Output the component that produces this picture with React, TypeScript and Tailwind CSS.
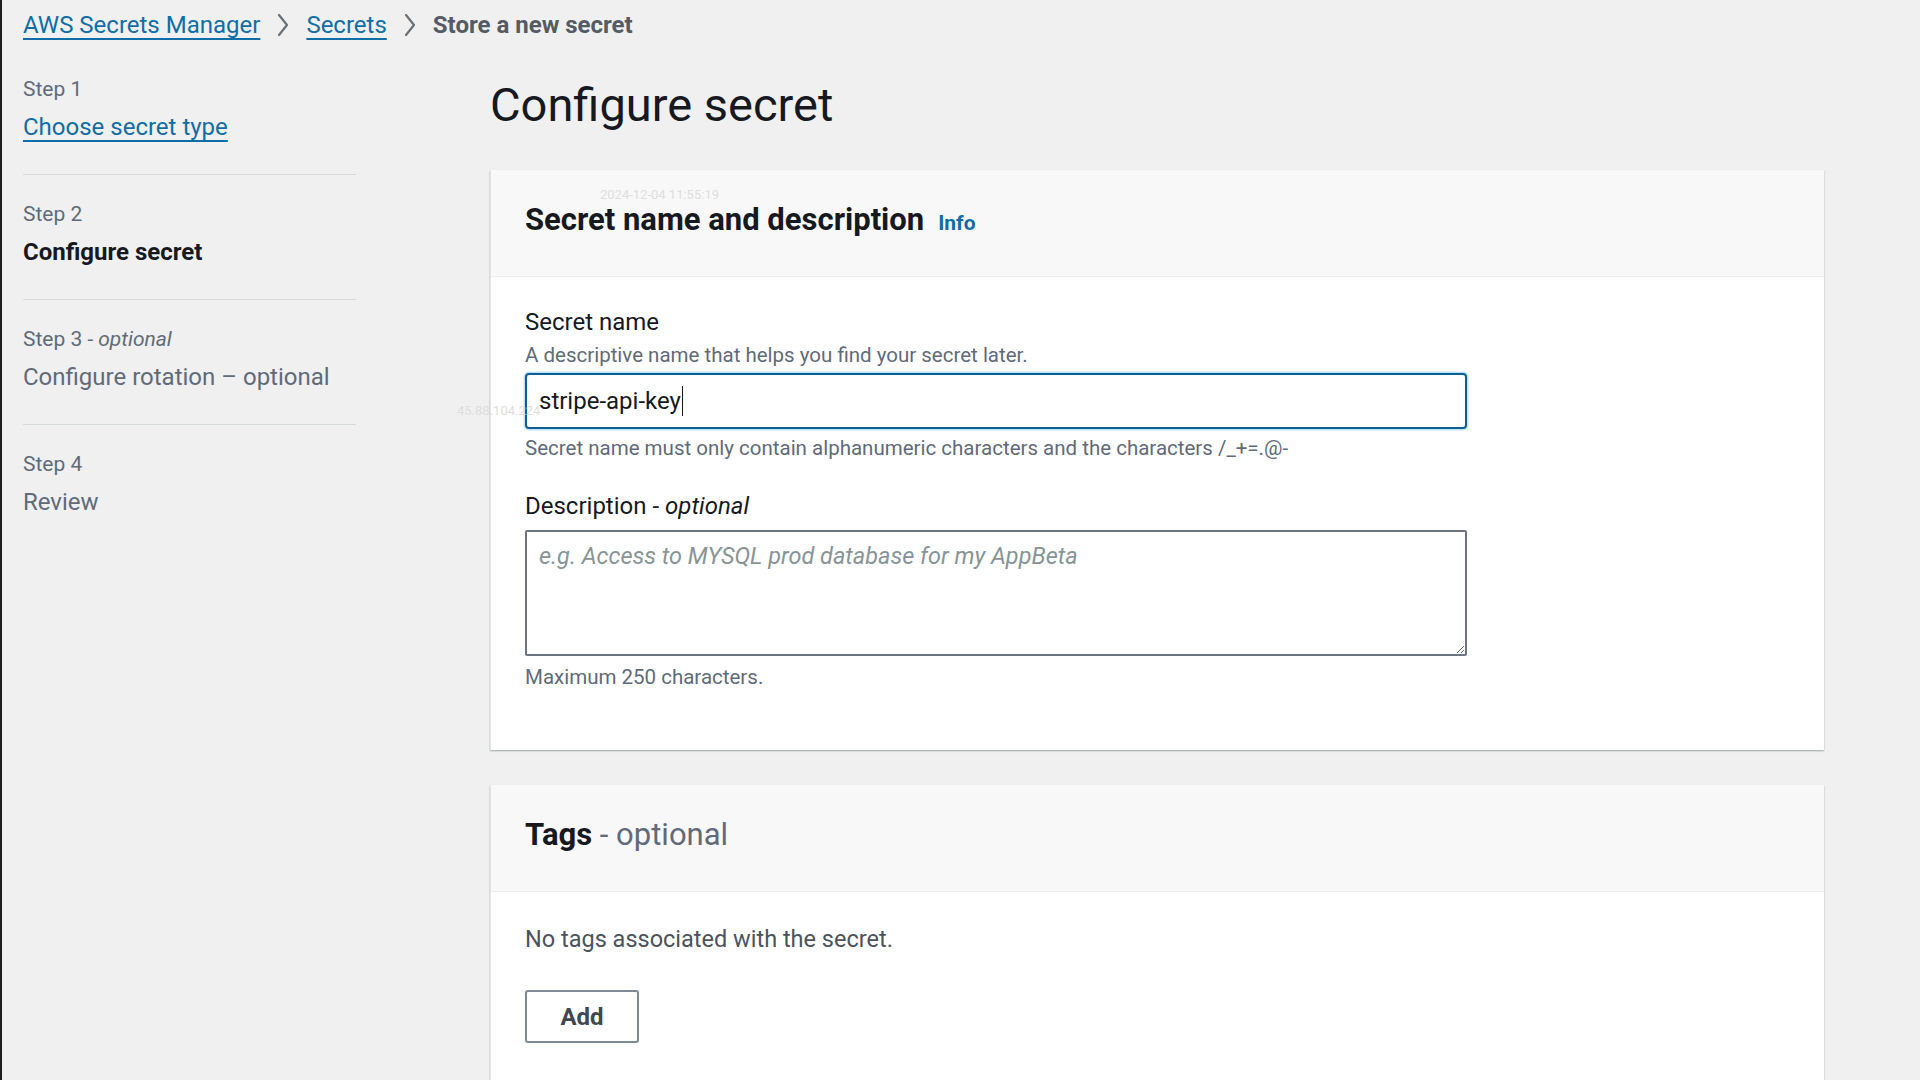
import React from 'react';

const steps = [
  { label: 'Step 1', title: 'Choose secret type', kind: 'link' },
  { label: 'Step 2', title: 'Configure secret', kind: 'current' },
  { label: 'Step 3', optional: true, title: 'Configure rotation – optional', kind: 'disabled' },
  { label: 'Step 4', title: 'Review', kind: 'disabled' },
];

function Chevron() {
  return (
    <svg width="16" height="26" viewBox="0 0 16 26" fill="none" className="mx-[15px]">
      <path d="M4 3 L12 13 L4 23" stroke="#687078" strokeWidth="2.2" strokeLinecap="round" strokeLinejoin="round" />
    </svg>
  );
}

function Breadcrumbs() {
  return (
    <nav className="flex h-[50px] items-center pl-[21px] text-[24px] leading-[34px]">
      <a className="text-[#0f6ea8] underline decoration-[1.5px] underline-offset-[5px]">AWS Secrets Manager</a>
      <Chevron />
      <a className="text-[#0f6ea8] underline decoration-[1.5px] underline-offset-[5px]">Secrets</a>
      <Chevron />
      <span className="font-bold text-[#545b64]">Store a new secret</span>
    </nav>
  );
}

function Sidebar() {
  return (
    <aside className="ml-[21px] mt-[25px] w-[333px] shrink-0">
      {steps.map((s, i) => (
        <div key={s.label}>
          <div className="h-[28px] text-[21px] leading-[28px] text-[#5f6b7a]">
            {s.label}
            {s.optional && <span className="italic"> - optional</span>}
          </div>
          <div
            className={
              'mt-[7px] h-[34px] text-[24px] leading-[34px] ' +
              (s.kind === 'link'
                ? 'text-[#0f6ea8] underline decoration-[1.5px] underline-offset-[5px]'
                : s.kind === 'current'
                  ? 'font-bold text-[#16191f]'
                  : 'text-[#5f6b7a]')
            }
          >
            {s.title}
          </div>
          {i < steps.length - 1 && <div className="mb-[25px] mt-[30px] h-px bg-[#d5dbdb]" />}
        </div>
      ))}
    </aside>
  );
}

function Card({ header, children }: { header: React.ReactNode; children: React.ReactNode }) {
  return (
    <section className="w-[1334px] border-l border-[#e3e3e3] bg-white shadow-[0_1px_1.5px_0_rgba(0,28,36,0.35)]">
      <div className="h-[107px] border-b border-[#eaeded] bg-[#f8f8f8] px-[34px] pt-[34px]">{header}</div>
      {children}
    </section>
  );
}

export default function App() {
  return (
    <div
      className="relative h-[1080px] w-full overflow-hidden border-l-2 border-[#1d1d1d] bg-[#f0f0f0] text-[#16191f]"
      style={{ fontFamily: 'Roboto, "Liberation Sans", sans-serif' }}
    >
      <Breadcrumbs />
      <div className="flex">
        <Sidebar />
        <main className="ml-[134px] flex flex-col">
          <h1 className="mt-[27px] h-[56px] text-[47px] font-normal leading-[56px] text-[#16191f]">Configure secret</h1>

          <div className="mt-[37px]">
            <Card
              header={
                <div className="flex items-baseline gap-[14px]">
                  <h2 className="text-[31px] font-bold leading-[32px]">Secret name and description</h2>
                  <a className="text-[21px] font-bold leading-[32px] text-[#0f6ea8]">Info</a>
                </div>
              }
            >
              <div className="px-[34px] pb-[59px] pt-[29px]">
                <div className="h-[32px] text-[24px] leading-[32px]">Secret name</div>
                <div className="mt-[3px] h-[28px] text-[20.5px] leading-[28px] text-[#5f6b7a]">
                  A descriptive name that helps you find your secret later.
                </div>
                <div className="mt-[4px] flex h-[56px] w-[942px] items-center rounded-[4px] border-2 border-[#0b5d95] px-[12px] text-[24px] shadow-[0_0_0_1.5px_#bfe3f7]">
                  <span>stripe-api-key</span>
                  <span className="ml-px h-[30px] w-px bg-[#16191f]" />
                </div>
                <div className="mt-[5px] h-[28px] text-[20.5px] leading-[28px] text-[#5f6b7a]">
                  Secret name must only contain alphanumeric characters and the characters /_+=.@-
                </div>
                <div className="mt-[28px] h-[32px] text-[24px] leading-[32px]">
                  Description - <span className="italic">optional</span>
                </div>
                <textarea
                  readOnly
                  placeholder="e.g. Access to MYSQL prod database for my AppBeta"
                  className="mt-[8px] block h-[126px] w-[942px] rounded-[2px] border-2 border-[#6b7480] px-[12px] py-[8px] text-[23.5px] italic leading-[32px] outline-none placeholder:text-[#879596]"
                />
                <div className="mt-[7px] h-[28px] text-[20.5px] leading-[28px] text-[#5f6b7a]">Maximum 250 characters.</div>
              </div>
            </Card>
          </div>

          <div className="mt-[35px]">
            <Card
              header={
                <h2 className="text-[31px] leading-[32px]">
                  <span className="font-bold">Tags</span>
                  <span className="text-[#5f6b7a]"> - optional</span>
                </h2>
              }
            >
              <div className="px-[34px] pb-[60px] pt-[31px]">
                <div className="h-[32px] text-[23.5px] leading-[32px] text-[#4b535c]">No tags associated with the secret.</div>
                <button className="mt-[35px] flex h-[53px] w-[114px] items-center justify-center rounded-[3px] border-2 border-[#7d8998] bg-white text-[24px] font-bold text-[#414750]">
                  Add
                </button>
              </div>
            </Card>
          </div>
        </main>
      </div>

      {/* capture watermarks */}
      <span className="absolute left-[598px] top-[188px] text-[13px] leading-[14px] text-[#dedede]">2024-12-04 11:55:19</span>
      <span className="absolute left-[455px] top-[404px] text-[13px] leading-[14px] text-[#dedede]">45.88.104.224</span>
    </div>
  );
}
